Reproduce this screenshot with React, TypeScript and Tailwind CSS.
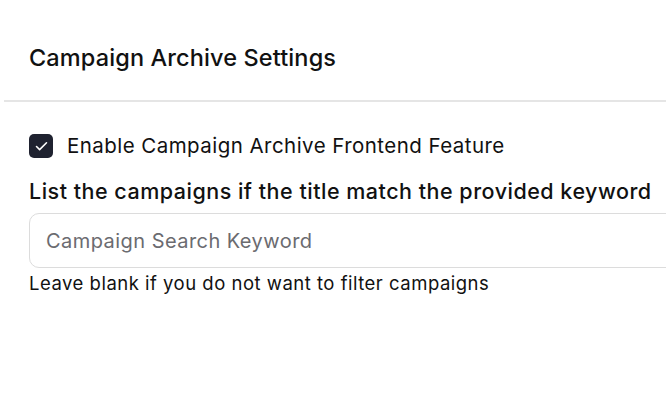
import { Check } from 'lucide-react';

export default function App() {
  return (
    <div className="h-[420px] w-[672px] bg-white text-[#111111] overflow-hidden" style={{ fontFamily: 'Inter, "Noto Sans", sans-serif' }}>
      <div className="w-[666px] overflow-hidden">
        {/* Header */}
        <div className="pl-[29px] pt-[42px] pb-[27px]">
          <h1 className="text-[23.5px] font-medium leading-[31px] tracking-[0.12px]">Campaign Archive Settings</h1>
        </div>
        <div className="ml-[4px] border-t-2 border-[#e5e5e5]" />

        {/* Settings */}
        <div className="pl-[29px] pt-[32px]">
          <label className="flex items-center gap-[14px]">
            <span className="flex h-[24px] w-[24px] items-center justify-center rounded-[5px] bg-[#1f2230]">
              <Check className="h-[15px] w-[15px] text-white" strokeWidth={2.5} />
            </span>
            <span className="text-[20.5px] leading-[24px] tracking-[0.45px]">Enable Campaign Archive Frontend Feature</span>
          </label>

          <p className="mt-[20px] text-[21.5px] font-medium leading-[26px] tracking-[0.5px]">
            List the campaigns if the title match the provided keyword
          </p>

          <div className="mt-[9px] w-[700px]">
            <input
              type="text"
              placeholder="Campaign Search Keyword"
              className="h-[55px] w-full rounded-[10px] border border-[#dcdcdc] px-[16px] text-[20px] tracking-[0.45px] outline-none placeholder:text-[#6b6b70]"
            />
          </div>

          <p className="mt-[3px] text-[18.5px] leading-[24px] tracking-[0.5px]">Leave blank if you do not want to filter campaigns</p>
        </div>
      </div>
    </div>
  );
}
